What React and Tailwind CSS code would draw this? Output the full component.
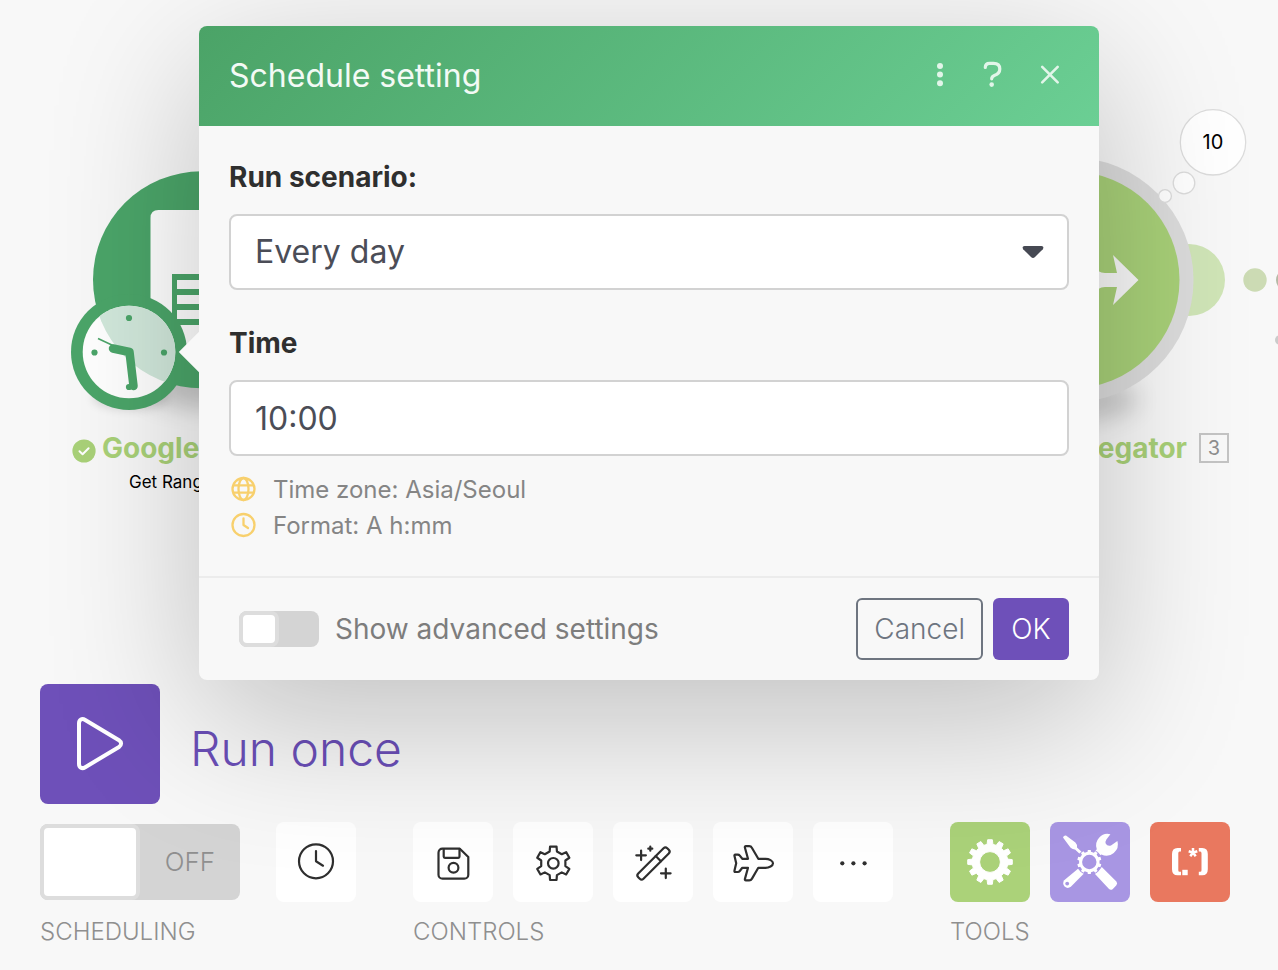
import React from "react";

const polar = (cx, cy, r, deg) => {
  const a = (deg * Math.PI) / 180;
  return `${(cx + r * Math.cos(a)).toFixed(2)} ${(cy + r * Math.sin(a)).toFixed(2)}`;
};

function gearPath(cx, cy, teeth, rIn, rOut, baseDeg, tipDeg, start = -90) {
  const pts = [];
  for (let i = 0; i < teeth; i++) {
    const a = start + (360 / teeth) * i;
    pts.push(
      polar(cx, cy, rIn, a - baseDeg),
      polar(cx, cy, rOut, a - tipDeg),
      polar(cx, cy, rOut, a + tipDeg),
      polar(cx, cy, rIn, a + baseDeg)
    );
  }
  return `M${pts.join("L")}Z`;
}

function LineIcon({ children }) {
  return (
    <svg
      viewBox="0 0 80 80"
      className="size-20"
      fill="none"
      stroke="#2f2f2f"
      strokeWidth="2.2"
      strokeLinecap="round"
      strokeLinejoin="round"
      aria-hidden="true"
    >
      {children}
    </svg>
  );
}

const ClockIcon = () => (
  <LineIcon>
    <circle cx="40" cy="39.3" r="17" />
    <path d="M40 29v10.3l7 4.4" />
  </LineIcon>
);

const SaveIcon = () => (
  <LineIcon>
    <path d="M29.5 26.7H46.8L55.3 35V52.7a4 4 0 0 1-4 4H29.5a4 4 0 0 1-4-4V30.7a4 4 0 0 1 4-4Z" />
    <path d="M30.7 27v7.6a1.2 1.2 0 0 0 1.2 1.2h13.4a1.2 1.2 0 0 0 1.2-1.2V27" />
    <circle cx="40.5" cy="45.7" r="4.9" />
  </LineIcon>
);

const GearIcon = () => (
  <LineIcon>
    <path d={gearPath(40.3, 41.3, 6, 12.4, 17, 17, 11)} />
    <circle cx="40.3" cy="41.3" r="5.3" />
  </LineIcon>
);

const WandIcon = () => (
  <LineIcon>
    <g transform="translate(40.5 41.5) rotate(-45)">
      <rect x="-20.5" y="-3.7" width="41" height="7.4" rx="2.6" />
      <path d="M6.8-3.7v7.4" />
    </g>
    <path d="M23.3 33.3h9.6M28.1 28.5v9.6M35.3 26.7h4M37.3 24.7v4M48 51.3h9.6M52.8 46.5v9.6" />
  </LineIcon>
);

const PlaneIcon = () => (
  <LineIcon>
    <path d="M60 41.3C60 38.8 56 36.8 52.5 36.8H45.3L39 26Q38 24.2 36.2 24.2H33Q31.5 24.2 32 26L35 36.8H29.3L26.8 33.6Q26 32.6 24.8 32.6H22.3Q21.2 32.6 21.5 34L23.2 41.3L21.5 48.6Q21.2 50 22.3 50H24.8Q26 50 26.8 49L29.3 45.8H35L32 56.6Q31.5 58.4 33 58.4H36.2Q38 58.4 39 56.6L45.3 45.8H52.5C56 45.8 60 43.8 60 41.3Z" />
  </LineIcon>
);

const MoreIcon = () => (
  <LineIcon>
    <g fill="#2f2f2f" stroke="none">
      <circle cx="29.3" cy="41.3" r="2.1" />
      <circle cx="40.4" cy="41.3" r="2.1" />
      <circle cx="51.6" cy="41.3" r="2.1" />
    </g>
  </LineIcon>
);

const FlowToolIcon = () => (
  <svg viewBox="0 0 80 80" className="size-20" aria-hidden="true">
    <path
      fill="#fff"
      stroke="#fff"
      strokeWidth="1"
      strokeLinejoin="round"
      fillRule="evenodd"
      d={gearPath(40, 40, 12, 17.8, 22.4, 9.5, 6) + "M50.4 40a10.4 10.4 0 1 0-20.8 0a10.4 10.4 0 1 0 20.8 0Z"}
    />
  </svg>
);

const WrenchToolIcon = () => (
  <svg viewBox="0 0 80 80" className="size-20" aria-hidden="true">
    <g fill="#fff">
      <path d="M13 15.4Q13.6 13.4 16 13.6L25.4 20.6Q27.4 22.6 27 25.4L33.2 31.2L31.2 33.2L25 27.4Q22 27.6 20.4 25.6Z" />
      <path d="M60.400 12.300A11.400 11.400 0 0 0 46.800 27.200L44.800 29.400L49.400 34L51.400 32.400A11.400 11.400 0 0 0 67.400 19L61 23.600Q57.400 24.600 55.800 21.800Q55 19.400 56.400 17.400Z" />
      <path d="M44.800 51.800L51.800 45L66.400 59.6Q68 61.6 66.2 63.4L62.6 67.2Q60.6 68.6 58.8 66.8Z" />
      <path d="M28.6 46.2L34 51.6L20.8 64.8Q17.6 67.2 14.6 64.6Q12 61.4 14.2 58.2Z" />
    </g>
    <circle cx="17.2" cy="61.6" r="1.9" fill="#a896e3" />
    <circle cx="39.3" cy="40" r="13" fill="#a896e3" />
    <path
      fill="#fff"
      fillRule="evenodd"
      d={gearPath(39.3, 40, 10, 10.3, 12.2, 9.5, 7) + "M46.500 40a7.200 7.200 0 1 0-14.400 0a7.200 7.200 0 1 0 14.400 0Z"}
    />
  </svg>
);

const ParserToolIcon = () => (
  <svg viewBox="0 0 80 80" className="size-20" aria-hidden="true">
    <g fill="#fff">
      <path d="M31 26H27.5Q22 26 22 32V47.3Q22 53.3 27.5 53.3H31V49.8H29.6Q28.3 49.8 28.3 48.2V31.2Q28.3 29.6 29.6 29.6H31Z" />
      <path d="M48.8 26H52.3Q57.8 26 57.8 32V47.3Q57.8 53.3 52.3 53.3H48.8V49.8H50.2Q51.5 49.8 51.5 48.2V31.2Q51.5 29.6 50.2 29.6H48.8Z" />
      <rect x="32.3" y="47.8" width="5.4" height="5.4" />
    </g>
    <path d="M43 30.6V26M43 30.6L38.700 29.200M43 30.6L47.300 29.200M43 30.6L40.300 34.300M43 30.6L45.700 34.300" stroke="#fff" strokeWidth="2.500" />
  </svg>
);

function Canvas() {
  return (
    <div className="absolute inset-0 overflow-hidden">
      <svg className="absolute top-0 left-0 h-[680px] w-[1600px]" viewBox="0 0 1600 680" aria-hidden="true">
        <defs>
          <filter id="soft" x="-50%" y="-100%" width="200%" height="300%">
            <feGaussianBlur stdDeviation="12" />
          </filter>
          <filter id="softSmall" x="-50%" y="-50%" width="200%" height="200%">
            <feGaussianBlur stdDeviation="5" />
          </filter>
          <clipPath id="face">
            <circle cx="129" cy="352" r="46.3" />
          </clipPath>
        </defs>

        <ellipse cx="206" cy="386" rx="66" ry="22" fill="#000" opacity=".2" filter="url(#soft)" />
        <circle cx="201.5" cy="279.8" r="108.5" fill="#4ba569" />
        <path d="M158.500 210H250V350H158.500Q150.500 350 150.500 342V218Q150.500 210 158.500 210Z" fill="#fff" />
        <path
          fill="#4ba569"
          fillRule="evenodd"
          d="M172 274H240V325H172ZM177 280V289H240V280ZM177 295V304H240V295ZM177 310V319H240V310Z"
        />

        <ellipse cx="130" cy="398" rx="38" ry="12" fill="#000" opacity=".12" filter="url(#softSmall)" />
        <circle cx="129" cy="352" r="58" fill="#4ba569" />
        <circle cx="129" cy="352" r="46.3" fill="#fff" />
        <circle cx="201.500" cy="279.8" r="108.500" fill="#d1e8db" clipPath="url(#face)" />
        <g fill="#4ba569">
          <circle cx="129" cy="318" r="3.1" />
          <circle cx="164" cy="352.500" r="3.1" />
          <circle cx="94.500" cy="352.500" r="3.1" />
          <circle cx="129" cy="387" r="3.1" />
        </g>
        <path d="M113 348.500L129.500 352L133.500 386" fill="none" stroke="#4ba569" strokeWidth="8.5" strokeLinecap="round" strokeLinejoin="round" />
        <path d="M98 338.500L114 346" stroke="#4ba569" strokeWidth="1.6" />

        <ellipse cx="1076" cy="400" rx="62" ry="20" fill="#000" opacity=".18" filter="url(#soft)" />
        <circle cx="1189" cy="280" r="36" fill="#d0e5b7" />
        <circle cx="1071" cy="280" r="122.5" fill="#dcdcdc" />
        <circle cx="1071" cy="280" r="108.500" fill="#a8d078" />
        <path d="M1090 264Q1098 273 1105 273H1117L1113 255L1138.500 280L1113 305L1117 287H1105Q1098 287 1090 296Z" fill="#f8f8f8" />
        <circle cx="1255" cy="280" r="11.7" fill="#ccdbb4" />
        <circle cx="1287" cy="280" r="11" fill="#b5b9a6" />
        <circle cx="1280" cy="340" r="5" fill="#cbcbcb" />
        <g fill="#fff" stroke="#dcdcdc" strokeWidth="1.3">
          <circle cx="1165" cy="196" r="6.4" />
          <circle cx="1184" cy="183" r="10.8" />
          <circle cx="1213" cy="142.300" r="32.7" />
        </g>
        <circle cx="84" cy="451" r="11.6" fill="#a9d178" />
        <path d="M79.500 451.300L82.600 454.200L88.600 448.300" fill="none" stroke="#fff" strokeWidth="2" strokeLinecap="round" strokeLinejoin="round" />
      </svg>

      <div className="absolute top-[430px] left-[102px] text-[28px] leading-9 font-bold whitespace-nowrap text-[#a9d178]">
        Google Sheets
      </div>
      <div className="absolute top-[470px] left-[129px] text-[17px] leading-6 whitespace-nowrap text-black">
        Get Range Values
      </div>
      <div className="absolute top-[430px] left-[929px] flex w-[300px] items-center justify-end gap-3 whitespace-nowrap">
        <span className="text-[28px] leading-9 font-bold text-[#a9d178]">Array aggregator</span>
        <span className="flex size-[30px] items-center justify-center border-2 border-[#c4c4c4] text-[20px] leading-6 text-[#8f8f8f]">
          3
        </span>
      </div>
      <div className="absolute top-[130px] left-[1193px] w-10 text-center text-[20px] leading-6 text-black">10</div>
    </div>
  );
}

const controls = [
  { label: "Save", Icon: SaveIcon },
  { label: "Scenario settings", Icon: GearIcon },
  { label: "Auto-align", Icon: WandIcon },
  { label: "Explain flow", Icon: PlaneIcon },
  { label: "More", Icon: MoreIcon },
];

function Toolbar() {
  return (
    <div className="relative px-10 pb-[22px]">
      <button type="button" className="flex items-center gap-[30px] text-[#6b4fb8]">
        <span className="flex size-[120px] items-center justify-center rounded-lg bg-[#6e50b9]">
          <svg viewBox="0 0 120 120" className="size-[120px]" fill="none" stroke="#fff" strokeWidth="4" strokeLinejoin="round" aria-hidden="true">
            <path d="M39 39.500C39 35.500 42 34 45.200 36L79 56.200C81.800 58 81.800 61.200 79 63L45.200 83.200C42 85.200 39 83.700 39 79.700Z" />
          </svg>
        </span>
        <span className="pt-[10px] text-[48px] leading-[60px] font-light">Run once</span>
      </button>

      <div className="mt-[18px] flex gap-[57px]">
        <section>
          <div className="flex items-center gap-9">
            <label className="flex h-[76px] w-[200px] cursor-pointer items-center rounded-lg bg-[#d4d4d4]">
              <input type="checkbox" className="sr-only" aria-label="Scheduling" />
              <span className="h-[76px] w-[100px] rounded-lg border-4 border-[#dddddd] bg-white" />
              <span className="flex-1 text-center text-[26px] leading-8 font-light text-[#8f8f8f]">OFF</span>
            </label>
            <button type="button" aria-label="Schedule setting" className="size-20 rounded-lg bg-white">
              <ClockIcon />
            </button>
          </div>
          <h2 className="mt-[14px] text-[24px] leading-8 font-light text-[#8f8f8f]">SCHEDULING</h2>
        </section>
        <section>
          <div className="flex gap-5">
            {controls.map(({ label, Icon }) => (
              <button key={label} type="button" aria-label={label} className="size-20 rounded-lg bg-white">
                <Icon />
              </button>
            ))}
          </div>
          <h2 className="mt-[14px] text-[24px] leading-8 font-light text-[#8f8f8f]">CONTROLS</h2>
        </section>
        <section>
          <div className="flex gap-5">
            <button type="button" aria-label="Flow control" className="size-20 rounded-lg bg-[#abd279]">
              <FlowToolIcon />
            </button>
            <button type="button" aria-label="Tools" className="size-20 rounded-lg bg-[#a896e3]">
              <WrenchToolIcon />
            </button>
            <button type="button" aria-label="Text parser" className="size-20 rounded-lg bg-[#e9785f]">
              <ParserToolIcon />
            </button>
          </div>
          <h2 className="mt-[14px] text-[24px] leading-8 font-light text-[#8f8f8f]">TOOLS</h2>
        </section>
      </div>
    </div>
  );
}

function ScheduleDialog() {
  return (
    <div className="absolute inset-x-0 top-0 flex justify-center pt-[26px] pl-5">
      <div
        role="dialog"
        aria-labelledby="dialog-title"
        className="relative w-full max-w-[900px] rounded-lg bg-[#f8f8f8] shadow-[0_40px_150px_rgba(0,0,0,0.23)]"
      >
        <span className="absolute top-[311px] -left-[14px] size-[30px] rotate-45 bg-[#f8f8f8]" />
        <header className="relative flex h-[100px] items-center justify-between rounded-t-lg bg-linear-[135deg] from-[#4ba367] to-[#6bcf94] px-[30px]">
          <h1 id="dialog-title" className="text-[32px] leading-10 text-[#f3faf5]">
            Schedule setting
          </h1>
          <div className="flex items-center text-[#e2f5e9]">
            <button type="button" aria-label="More options" className="size-10">
              <svg viewBox="0 0 40 40" className="size-10" fill="currentColor" aria-hidden="true">
                <circle cx="21" cy="10" r="3" />
                <circle cx="21" cy="18.600" r="3" />
                <circle cx="21" cy="27.200" r="3" />
              </svg>
            </button>
            <button type="button" aria-label="Help" className="ml-3 size-10">
              <svg viewBox="0 0 40 40" className="size-10" fill="none" stroke="currentColor" strokeWidth="3.200" strokeLinecap="round" aria-hidden="true">
                <path d="M14.300 11.500C14.300 8.500 16.300 7.400 18.500 7.400H22.500C26.500 7.400 28.800 9.500 28.800 13C28.800 16.200 26.800 18.200 23.800 19.200C21.600 20 20.700 20.500 20.700 22.800" />
                <circle cx="20.700" cy="28.600" r="2.300" fill="currentColor" stroke="none" />
              </svg>
            </button>
            <button type="button" aria-label="Close" className="ml-[18px] size-10">
              <svg viewBox="0 0 40 40" className="size-10" stroke="currentColor" strokeWidth="2.600" strokeLinecap="round" aria-hidden="true">
                <path d="M13.200 10.800L28.700 26.300M28.700 10.800L13.200 26.300" />
              </svg>
            </button>
          </div>
        </header>

        <div className="relative px-[30px] pt-[30px] pb-8">
          <label htmlFor="run" className="block text-[28px] leading-[42px] font-bold text-[#2f2f2f]">
            Run scenario:
          </label>
          <div className="relative mt-4">
            <select
              id="run"
              className="h-[76px] w-full appearance-none rounded-lg border-2 border-[#d2d2d2] bg-white px-6 text-[32px] text-[#4b4d57]"
            >
              <option>Every day</option>
            </select>
            <svg viewBox="0 0 22 14" className="pointer-events-none absolute top-[31px] right-[25px] h-[14px] w-[22px]" fill="#464953" aria-hidden="true">
              <path d="M2.500 1H19.500Q22.500 1.500 20.800 4.200L13 12Q11 13.800 9 12L1.200 4.200Q-.500 1.500 2.500 1Z" />
            </svg>
          </div>

          <label htmlFor="time" className="mt-8 block text-[28px] leading-[42px] font-bold text-[#2f2f2f]">
            Time
          </label>
          <input
            id="time"
            type="text"
            defaultValue="10:00"
            className="mt-4 block h-[76px] w-full rounded-lg border-2 border-[#d2d2d2] bg-white px-6 text-[32px] text-[#4b4d57]"
          />

          <ul className="mt-4 text-[24px] leading-9 text-[#858585]">
            <li className="flex items-center gap-4">
              <svg viewBox="0 0 28 28" className="size-7" fill="none" stroke="#f8d06d" strokeWidth="2.300" aria-hidden="true">
                <circle cx="14.500" cy="13" r="11" />
                <ellipse cx="14.500" cy="13" rx="5" ry="11" />
                <path d="M4.400 9.300H24.600M4.400 16.700H24.600" />
              </svg>
              <span>Time zone: Asia/Seoul</span>
            </li>
            <li className="flex items-center gap-4">
              <svg viewBox="0 0 28 28" className="size-7" fill="none" stroke="#f8d06d" strokeWidth="2.300" strokeLinecap="round" strokeLinejoin="round" aria-hidden="true">
                <circle cx="14.500" cy="13" r="11" />
                <path d="M14.500 6.500V13L19 16" />
              </svg>
              <span>Format: A h:mm</span>
            </li>
          </ul>
        </div>

        <footer className="flex items-center justify-between border-t-2 border-[#ececec] py-5 pr-[30px] pl-10">
          <label className="flex cursor-pointer items-center gap-4">
            <input type="checkbox" className="sr-only" />
            <span className="h-9 w-20 rounded-lg bg-[#d4d4d4]">
              <span className="block h-9 w-10 rounded-lg border-4 border-[#dddddd] bg-white" />
            </span>
            <span className="text-[28px] leading-9 text-[#7d7d7d]">Show advanced settings</span>
          </label>
          <div className="flex gap-[10px]">
            <button type="button" className="h-[62px] rounded-md border-2 border-[#6e7580] px-4 text-[28px] leading-9 font-light text-[#6e7580]">
              Cancel
            </button>
            <button type="button" className="h-[62px] w-[76px] rounded-md bg-[#6e50b9] text-[28px] leading-9 font-light text-white">
              OK
            </button>
          </div>
        </footer>
      </div>
    </div>
  );
}

export default function App() {
  return (
    <div className="relative flex min-h-screen flex-col overflow-hidden bg-[#f8f8f8] font-['Inter',sans-serif]">
      <Canvas />
      <div className="min-h-[680px] flex-1" />
      <Toolbar />
      <ScheduleDialog />
    </div>
  );
}
